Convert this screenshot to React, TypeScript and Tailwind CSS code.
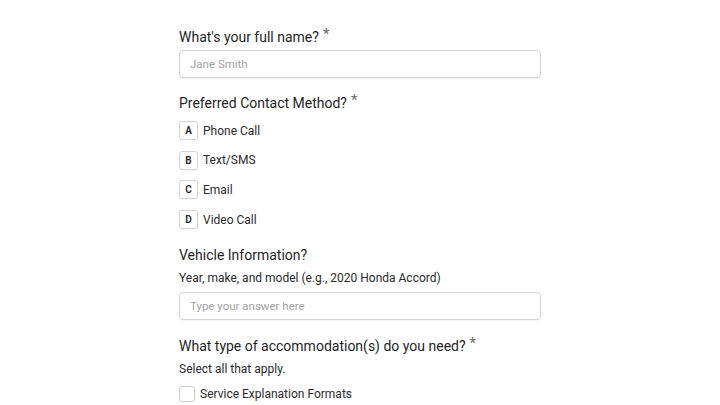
const options = [
  { key: "A", label: "Phone Call" },
  { key: "B", label: "Text/SMS" },
  { key: "C", label: "Email" },
  { key: "D", label: "Video Call" },
];

function Question({ text, required }: { text: string; required?: boolean }) {
  return (
    <h2 className="flex items-start text-[14px] leading-[20px] text-[#1f1f1f]">
      {text}
      {required && <span className="ml-[4px] text-[15px] leading-[14px] text-[#6b6b6b]">*</span>}
    </h2>
  );
}

function TextInput({ placeholder }: { placeholder: string }) {
  return (
    <input
      type="text"
      placeholder={placeholder}
      className="h-[28px] w-full rounded-[4px] border border-[#d4d4d4] bg-white px-[10px] text-[11.5px] text-[#333] placeholder:text-[#a3a3a3] shadow-[0_1px_1px_rgba(0,0,0,0.04)] outline-none"
    />
  );
}

export default function App() {
  return (
    <div className="min-h-screen bg-white font-['Roboto',sans-serif]">
      <div className="mx-auto w-[362px] pt-[27px]">
        <Question text="What's your full name?" required />
        <div className="mt-[3px]">
          <TextInput placeholder="Jane Smith" />
        </div>

        <div className="mt-[15px]">
          <Question text="Preferred Contact Method?" required />
        </div>
        <div className="mt-[8px] flex flex-col gap-[10.7px]">
          {options.map((o) => (
            <label key={o.key} className="flex items-center gap-[5px] text-[12px] text-[#2b2b2b]">
              <span className="flex h-[19px] w-[19px] items-center justify-center rounded-[3px] border border-[#d4d4d4] text-[10px] font-semibold text-[#222] shadow-[0_1px_1px_rgba(0,0,0,0.04)]">
                {o.key}
              </span>
              {o.label}
            </label>
          ))}
        </div>

        <div className="mt-[15.5px]">
          <Question text="Vehicle Information?" />
        </div>
        <p className="mt-[4px] text-[12px] leading-[18px] text-[#2b2b2b]">
          Year, make, and model (e.g., 2020 Honda Accord)
        </p>
        <div className="mt-[5px]">
          <TextInput placeholder="Type your answer here" />
        </div>

        <div className="mt-[16px]">
          <Question text="What type of accommodation(s) do you need?" required />
        </div>
        <p className="mt-[4px] text-[12px] leading-[18px] text-[#2b2b2b]">Select all that apply.</p>
        <label className="mt-[7px] flex items-center gap-[5px] text-[12px] text-[#2b2b2b]">
          <span className="h-[16px] w-[16px] rounded-[3px] border border-[#cfcfcf] bg-white" />
          Service Explanation Formats
        </label>
      </div>
    </div>
  );
}
